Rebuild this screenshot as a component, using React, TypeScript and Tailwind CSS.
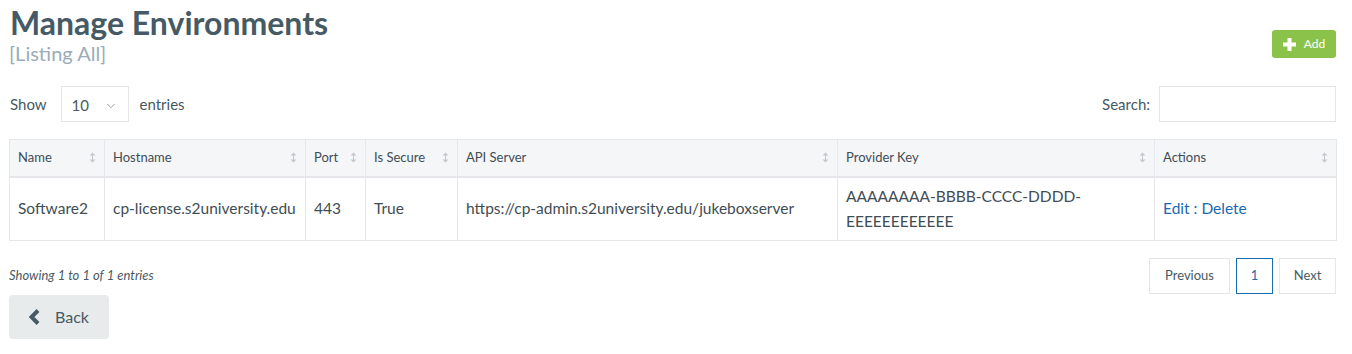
import { ChevronDown } from "lucide-react";

const font = { fontFamily: '"Lato", "Liberation Sans", sans-serif' };

function SortIcon() {
  return (
    <svg width="7" height="11" viewBox="0 0 7 11" className="shrink-0">
      <path d="M3.5 0.5 L6.5 3.5 H0.5 Z M3.5 10.5 L6.5 7.5 H0.5 Z" fill="#c4c8cc" />
      <rect x="3" y="3" width="1" height="5" fill="#c4c8cc" />
    </svg>
  );
}

const cols = [
  { label: "Name", w: "w-[95px]" },
  { label: "Hostname", w: "w-[201px]" },
  { label: "Port", w: "w-[60px]" },
  { label: "Is Secure", w: "w-[92px]" },
  { label: "API Server", w: "w-[380px]" },
  { label: "Provider Key", w: "w-[317px]" },
  { label: "Actions", w: "w-[182px]" },
];

export default function App() {
  return (
    <div className="w-[1352px] h-[354px] bg-white text-[#455a64] pl-[9px] pr-[16px]" style={font}>
      {/* Title row */}
      <div className="flex items-start justify-between">
        <div className="pt-[4px]">
          <h1 className="text-[32px] font-bold leading-[38px] text-[#455a64] ml-[1px]">Manage Environments</h1>
          <div className="text-[20px] leading-[22px] text-[#9aacb8]">[Listing All]</div>
        </div>
        <button className="mt-[30px] h-[28px] w-[64px] rounded-[3px] bg-[#8bc34a] text-white flex items-center justify-center gap-[8px] text-[12px]">
          <svg width="13" height="13" viewBox="0 0 13 13">
            <rect x="4.5" y="0" width="4" height="13" fill="white" />
            <rect x="0" y="4.5" width="13" height="4" fill="white" />
          </svg>
          <span>Add</span>
        </button>
      </div>

      {/* Show / Search */}
      <div className="mt-[22px] flex items-center justify-between">
        <div className="flex items-center text-[15px] pl-[1px]">
          <span>Show</span>
          <div className="ml-[14px] h-[36px] w-[68px] border border-[#e4e6e8] flex items-center justify-between px-[10px] pt-[3px]">
            <span className="text-[15px]">10</span>
            <ChevronDown size={14} strokeWidth={1.5} className="text-[#8a969e]" />
          </div>
          <span className="ml-[11px]">entries</span>
        </div>
        <div className="flex items-center text-[15px]">
          <span>Search:</span>
          <div className="ml-[9px] h-[36px] w-[177px] border border-[#e4e6e8]" />
        </div>
      </div>

      {/* Table */}
      <table className="mt-[17px] table-fixed border-collapse w-[1327px] text-[#3f4d55]">
        <thead>
          <tr className="bg-[#f5f6f8] border-b-2 border-[#e5e7ea]">
            {cols.map((c) => (
              <th key={c.label} className={`${c.w} h-[37px] border border-[#e5e7ea] px-[8px] font-normal text-left text-[13px]`}>
                <div className="flex items-center justify-between">
                  <span>{c.label}</span>
                  <SortIcon />
                </div>
              </th>
            ))}
          </tr>
        </thead>
        <tbody>
          <tr className="text-[15.5px]">
            <td className="h-[64px] border border-[#e5e7ea] px-[8px]">Software2</td>
            <td className="border border-[#e5e7ea] px-[8px]">cp-license.s2university.edu</td>
            <td className="border border-[#e5e7ea] px-[8px]">443</td>
            <td className="border border-[#e5e7ea] px-[8px]">True</td>
            <td className="border border-[#e5e7ea] px-[8px]">https://cp-admin.s2university.edu/jukeboxserver</td>
            <td className="border border-[#e5e7ea] px-[8px] leading-[25px]">
              AAAAAAAA-BBBB-CCCC-DDDD-
              <br />
              EEEEEEEEEEEE
            </td>
            <td className="border border-[#e5e7ea] px-[8px] text-[#1a6ab0]">Edit : Delete</td>
          </tr>
        </tbody>
      </table>

      {/* Footer */}
      <div className="mt-[17px] flex items-center justify-between">
        <div className="italic text-[13px] text-[#4a5a63]">Showing 1 to 1 of 1 entries</div>
        <div className="flex items-center gap-[6px] text-[13px]">
          <div className="h-[36px] w-[81px] border border-[#e4e6e8] flex items-center justify-center">Previous</div>
          <div className="h-[36px] w-[37px] border border-[#1a6ab0] text-[#1a6ab0] flex items-center justify-center">1</div>
          <div className="h-[36px] w-[57px] border border-[#e4e6e8] flex items-center justify-center">Next</div>
        </div>
      </div>
      <button className="mt-[1px] h-[44px] w-[100px] rounded-[4px] bg-[#e8ebec] flex items-center justify-center gap-[14px] text-[16px] text-[#455a64]">
        <svg width="12" height="16" viewBox="0 0 12 16">
          <path d="M9 1.5 L2.5 8 L9 14.5" stroke="#455a64" strokeWidth="4" fill="none" strokeLinejoin="miter" />
        </svg>
        <span>Back</span>
      </button>
    </div>
  );
}
